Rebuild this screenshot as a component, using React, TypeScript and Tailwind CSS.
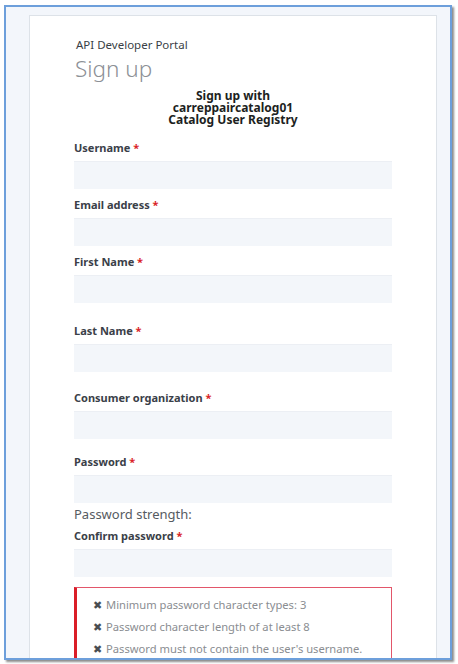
const fields: { label: string; mt: string }[] = [
  { label: 'Username', mt: 'mt-[15px]' },
  { label: 'Email address', mt: 'mt-[9px]' },
  { label: 'First Name', mt: 'mt-[9px]' },
  { label: 'Last Name', mt: 'mt-[21px]' },
  { label: 'Consumer organization', mt: 'mt-[19px]' },
  { label: 'Password', mt: 'mt-[16px]' },
];

const rules = [
  'Minimum password character types: 3',
  'Password character length of at least 8',
  "Password must not contain the user's username.",
];

function Field({ label, className }: { label: string; className?: string }) {
  return (
    <div className={className}>
      <div className="text-[11px] font-bold leading-[14px] text-[#3a4048]">
        {label} <span className="text-[#da1e28]">*</span>
      </div>
      <div className="mt-[6px] h-[28px] bg-[#f3f6fa] border-t border-[#eceff4]" />
    </div>
  );
}

export default function App() {
  return (
    <div className="h-[664px] w-[458px] overflow-hidden bg-white pl-[4px] pt-[5px] font-['Noto_Sans',sans-serif]">
      <div className="h-[655px] w-[448px] overflow-hidden border-2 border-[#6d9fdb] bg-[#f3f6fb] shadow-[2px_2px_2px_rgba(0,0,0,0.45)]">
        <div className="ml-[23px] mt-[8px] w-[408px] border border-[#dde2e8] bg-white pl-[44px] pr-[44px] pt-[22px] pb-[40px]">
          <div className="pl-[2px] text-[11.5px] leading-[14px] text-[#3a3f46]">API Developer Portal</div>
          <div className="mt-[3px] pl-[1px] text-[22.5px] font-light leading-[28px] text-[#8c9096]">Sign up</div>
          <div className="mt-[7px] text-center text-[12px] font-bold leading-[12px] text-[#1d1f22]">
            <div>Sign up with</div>
            <div>carreppaircatalog01</div>
            <div>Catalog User Registry</div>
          </div>
          {fields.map((f) => (
            <Field key={f.label} label={f.label} className={f.mt} />
          ))}
          <div className="mt-[3px] text-[13px] leading-[16px] text-[#565b62]">Password strength:</div>
          <Field label="Confirm password" className="mt-[7px]" />
          <div className="mt-[10px] border border-l-[3px] border-[#e2566a] border-l-[#da1e28] pl-[16px] pt-[6px] pb-[10px]">
            {rules.map((r) => (
              <div key={r} className="flex h-[22px] items-center gap-[4px] text-[11.2px] text-[#8a8d91]">
                <span className="text-[11px] text-[#4a4d52]">✖</span>
                <span>{r}</span>
              </div>
            ))}
          </div>
        </div>
      </div>
    </div>
  );
}
